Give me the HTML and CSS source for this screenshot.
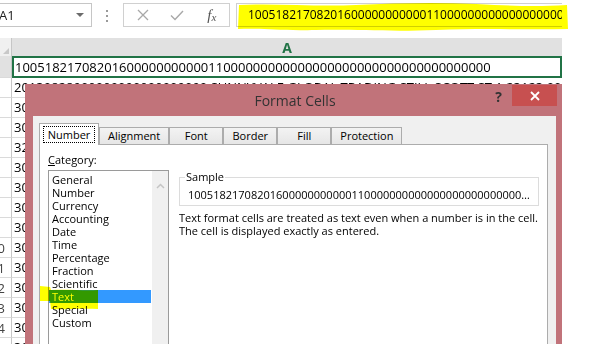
FILE: index.html
```html
<!DOCTYPE html>
<html lang="en">
<head>
    <meta charset="UTF-8">
    <title>Format Cells</title>
    <link rel="stylesheet" href="styles.css">
</head>
<body>
    <div class="page">
        <div class="shot">
            <!-- Barra de fórmulas -->
            <div class="formula-bar">
                <div class="name-box">
                    <span class="name-text">A1</span>
                    <span class="name-arrow"></span>
                </div>
                <div class="grip"><i></i><i></i><i></i></div>
                <div class="fx-buttons">
                    <span class="fx-btn">
                        <svg width="12" height="12" viewBox="0 0 12 12"><path d="M1 1 L11 11 M11 1 L1 11" stroke="#a8a8a8" stroke-width="1.3" fill="none"/></svg>
                    </span>
                    <span class="fx-btn">
                        <svg width="14" height="11" viewBox="0 0 14 11"><path d="M1 5.5 L5 9.5 L13 1" stroke="#a8a8a8" stroke-width="1.4" fill="none"/></svg>
                    </span>
                    <span class="fx-btn fx-label"><i>f</i><span>x</span></span>
                </div>
                <div class="formula-input">1005182170820160000000000011000000000000000000000000000000000000</div>
            </div>

            <!-- Hoja -->
            <div class="sheet">
                <div class="sheet-row header-row">
                    <div class="row-head corner"></div>
                    <div class="col-head">A</div>
                </div>
                <div class="sheet-row active-row">
                    <div class="row-head"></div>
                    <div class="cell selected">1005182170820160000000000011000000000000000000000000000000000000</div>
                </div>
                <div class="sheet-row"><div class="row-head"></div><div class="cell">20130828000000000000000000 SUNNYVALE GLOBAL TRADING STILL SCOTT ST 1 23123 0000</div></div>
                <div class="sheet-row"><div class="row-head"></div><div class="cell">3001482017</div></div>
                <div class="sheet-row"><div class="row-head"></div><div class="cell">3001482017</div></div>
                <div class="sheet-row"><div class="row-head"></div><div class="cell">3201482017</div></div>
                <div class="sheet-row"><div class="row-head"></div><div class="cell">3001482017</div></div>
                <div class="sheet-row"><div class="row-head"></div><div class="cell">3001482017</div></div>
                <div class="sheet-row"><div class="row-head"></div><div class="cell">3001482017</div></div>
                <div class="sheet-row"><div class="row-head"></div><div class="cell">3001482017</div></div>
                <div class="sheet-row"><div class="row-head"><span>10</span></div><div class="cell">3001482017</div></div>
                <div class="sheet-row"><div class="row-head"><span>11</span></div><div class="cell">3001482017</div></div>
                <div class="sheet-row"><div class="row-head"><span>12</span></div><div class="cell">3001482017</div></div>
                <div class="sheet-row"><div class="row-head"><span>13</span></div><div class="cell">3001482017</div></div>
                <div class="sheet-row"><div class="row-head"><span>14</span></div><div class="cell">3001482017</div></div>
                <div class="sheet-row"><div class="row-head"><span>15</span></div><div class="cell">3001482017</div></div>
            </div>

            <!-- Diálogo Format Cells -->
            <div class="dialog">
                <div class="dialog-title">
                    <span></span>
                    <span class="title-text">Format Cells</span>
                    <div class="title-buttons">
                        <span class="help">?</span>
                        <span class="close">
                            <svg width="10" height="10" viewBox="0 0 10 10"><path d="M1 1 L9 9 M9 1 L1 9" stroke="#fff" stroke-width="1.8" fill="none"/></svg>
                        </span>
                    </div>
                </div>
                <div class="dialog-body">
                    <div class="tabs">
                        <span class="tab active"><span class="focus">Number</span></span>
                        <span class="tab">Alignment</span>
                        <span class="tab">Font</span>
                        <span class="tab">Border</span>
                        <span class="tab">Fill</span>
                        <span class="tab">Protection</span>
                    </div>
                    <div class="tab-panel">
                        <div class="category">
                            <div class="category-label"><u>C</u>ategory:</div>
                            <div class="listbox">
                                <ul class="items">
                                    <li>General</li>
                                    <li>Number</li>
                                    <li>Currency</li>
                                    <li>Accounting</li>
                                    <li>Date</li>
                                    <li>Time</li>
                                    <li>Percentage</li>
                                    <li>Fraction</li>
                                    <li>Scientific</li>
                                    <li class="current">Text</li>
                                    <li>Special</li>
                                    <li>Custom</li>
                                </ul>
                                <div class="scrollbar">
                                    <svg width="9" height="6" viewBox="0 0 9 6"><path d="M1 5 L4.5 1.5 L8 5" stroke="#c4c4c4" stroke-width="1.5" fill="none"/></svg>
                                </div>
                            </div>
                        </div>
                        <div class="details">
                            <fieldset class="sample">
                                <legend>Sample</legend>
                                <div class="sample-value">1005182170820160000000000011000000000000000000000000000000000000</div>
                            </fieldset>
                            <p class="desc">Text format cells are treated as text even when a number is in the cell.<br>The cell is displayed exactly as entered.</p>
                        </div>
                    </div>
                </div>
            </div>
        </div>

        <!-- Resaltador amarillo -->
        <svg class="marker marker-formula" width="334" height="30" viewBox="0 0 334 30">
            <path d="M3 3 C40 1 80 5 120 3 S200 0 240 2 S300 5 331 3 L332 27 C290 28 250 26 200 28 S120 27 80 28 S30 26 2 27 Z" fill="#ffff00"/>
        </svg>
        <svg class="marker marker-text" width="61" height="26" viewBox="0 0 61 26">
            <path d="M1 1 L11 2 L12 5 C30 4 45 6 59 5 L59 24 C40 23 25 25 12 24 L11 16 L1 16 Z" fill="#ffff00"/>
        </svg>
    </div>
</body>
</html>
```

FILE: styles.css
```css
body {
    margin: 0;
    background-color: #fff;
    font-family: "Open Sans", sans-serif;
    color: #000;
}

.page {
    position: relative;
    width: 610px;
    height: 355px;
}

.shot {
    position: relative;
    width: 562px;
    height: 344px;
    overflow: hidden;
    background-color: #fff;
}

/* Barra de fórmulas */
.formula-bar {
    display: flex;
    align-items: flex-start;
    height: 38px;
    padding-top: 3px;
    box-sizing: border-box;
}

.name-box {
    display: flex;
    align-items: center;
    justify-content: space-between;
    width: 95px;
    height: 24px;
    margin-left: -3px;
    padding: 0 7px 0 1px;
    box-sizing: border-box;
    border: 1px solid #c6c6c6;
    font-size: 13px;
    color: #222;
}

.name-arrow {
    width: 0;
    height: 0;
    border-left: 4px solid transparent;
    border-right: 4px solid transparent;
    border-top: 4px solid #6b6b6b;
}

.grip {
    display: flex;
    flex-direction: column;
    gap: 3px;
    margin: 7px 15px 0 14px;
}

.grip i {
    width: 2px;
    height: 2px;
    background-color: #9a9a9a;
}

.fx-buttons {
    display: flex;
    width: 107px;
    height: 24px;
    padding-left: 2px;
    box-sizing: border-box;
    border: 1px solid #d0d0d0;
}

.fx-btn {
    display: flex;
    align-items: center;
    justify-content: center;
    width: 35px;
}

.fx-label {
    font-family: "Liberation Serif", serif;
    color: #555;
    font-size: 15px;
}

.fx-label span {
    font-size: 11px;
    font-style: italic;
    margin-top: 3px;
}

.formula-input {
    flex: 1;
    height: 24px;
    margin-left: 6px;
    padding-left: 11px;
    box-sizing: border-box;
    border: 1px solid #d0d0d0;
    border-right: none;
    font-size: 12px;
    line-height: 22px;
    white-space: nowrap;
    overflow: hidden;
}

/* Hoja */
.sheet-row {
    display: flex;
    height: 20px;
}

.header-row {
    height: 18px;
}

.active-row {
    height: 22px;
}

.row-head {
    display: flex;
    justify-content: flex-end;
    align-items: center;
    width: 12px;
    flex: none;
    padding-right: 6px;
    box-sizing: border-box;
    border-right: 1px solid #c6c6c6;
    border-bottom: 1px solid #dadada;
    overflow: hidden;
    font-size: 13px;
    color: #444;
    white-space: nowrap;
}

.row-head.corner {
    position: relative;
    background-color: #f0f0f0;
    border-bottom: none;
}

.corner::after {
    content: "";
    position: absolute;
    right: 2px;
    bottom: 2px;
    border-left: 6px solid transparent;
    border-bottom: 6px solid #c8c8c8;
}

.active-row .row-head {
    background-color: #e1e1e1;
}

.col-head {
    flex: 1;
    background-color: #e1e1e1;
    color: #217346;
    font-size: 14px;
    font-weight: bold;
    text-align: center;
    line-height: 19px;
}

.cell {
    flex: 1;
    padding-left: 2px;
    border-bottom: 1px solid #dadada;
    font-size: 13px;
    line-height: 19px;
    white-space: nowrap;
    overflow: hidden;
}

.cell.selected {
    border: 2px solid #217346;
    padding-left: 1px;
    line-height: 18px;
}

/* Diálogo */
.dialog {
    position: absolute;
    left: 25px;
    top: 84px;
    width: 539px;
    height: 280px;
    padding: 0 8px;
    box-sizing: border-box;
    background-color: #c1737a;
}

.dialog-title {
    display: grid;
    grid-template-columns: 1fr auto 1fr;
    height: 32px;
    margin-right: -1px;
}

.title-text {
    align-self: center;
    font-size: 14px;
    color: #333;
}

.title-buttons {
    display: flex;
    justify-content: flex-end;
    align-items: flex-start;
    padding-top: 1px;
}

.help {
    margin: 4px 10px 0 0;
    font-size: 14px;
    font-weight: bold;
    line-height: 16px;
    color: #333;
}

.close {
    display: flex;
    align-items: center;
    justify-content: center;
    width: 45px;
    height: 21px;
    background-color: #c75050;
}

.dialog-body {
    height: 248px;
    padding: 7px 8px 0 6px;
    background-color: #f0f0f0;
    font-size: 11px;
}

.tabs {
    position: relative;
    z-index: 1;
    display: flex;
    align-items: flex-end;
    height: 21px;
}

.tab {
    min-width: 54px;
    height: 17px;
    padding: 0 8px;
    box-sizing: border-box;
    border: 1px solid #acacac;
    border-bottom: none;
    background: linear-gradient(#f3f3f3, #e6e6e6);
    text-align: center;
    line-height: 16px;
}

.tab.active {
    display: flex;
    align-items: center;
    justify-content: center;
    width: 60px;
    height: 22px;
    margin-bottom: -1px;
    padding: 0 3px;
    background: #fff;
}

.focus {
    padding: 0 4px;
    border: 1px dotted #000;
    line-height: 15px;
}

.tab-panel {
    display: flex;
    gap: 10px;
    height: 220px;
    padding: 0 8px;
    border: 1px solid #acacac;
    background-color: #fff;
}

.category-label {
    margin-top: 7px;
    line-height: 16px;
}

.listbox {
    display: flex;
    width: 121px;
    height: 200px;
    margin-top: 2px;
    box-sizing: border-box;
    border: 1px solid #9a9a9a;
}

.items {
    flex: 1;
    margin: 0;
    padding: 2px 1px 0 0;
    list-style: none;
}

.items li {
    padding-left: 3px;
    line-height: 13px;
}

.items li.current {
    background-color: #3399ff;
    color: #fff;
}

.scrollbar {
    width: 16px;
    padding-top: 6px;
    text-align: center;
    background-color: #f0f0f0;
}

.details {
    width: 360px;
    padding-top: 24px;
}

.sample {
    min-width: 0;
    margin: 0;
    padding: 2px 8px 2px;
    border: 1px solid #dcdcdc;
}

.sample legend {
    margin-left: -3px;
    padding: 0 1px;
    line-height: 16px;
}

.sample-value {
    line-height: 16px;
    white-space: nowrap;
    overflow: hidden;
    text-overflow: ellipsis;
}

.desc {
    margin: 5px 0 0;
    line-height: 13px;
}

/* Resaltador */
.marker {
    position: absolute;
    mix-blend-mode: multiply;
}

.marker-formula {
    left: 236px;
    top: 2px;
}

.marker-text {
    left: 39px;
    top: 285px;
}
```
